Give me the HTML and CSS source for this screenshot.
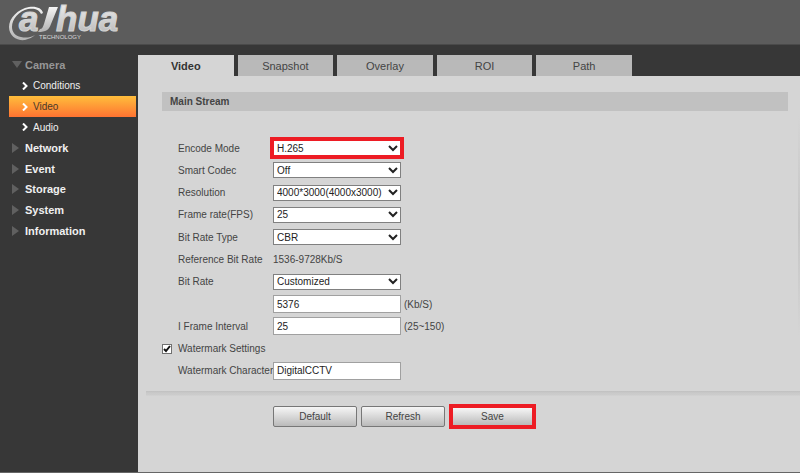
FILE: index.html
```html
<!DOCTYPE html>
<html lang="en">
<head>
  <meta charset="UTF-8">
  <meta name="viewport" content="width=device-width, initial-scale=1.0">
  <title>Camera - Video</title>
  <link rel="stylesheet" href="styles.css">
</head>
<body>
  <header class="header">
    <svg class="logo" width="124" height="44" viewBox="0 0 124 44" role="img" aria-label="alhua technology">
      <defs>
        <linearGradient id="silver" x1="0" y1="0" x2="0" y2="1">
          <stop offset="0" stop-color="#f4f4f4"/>
          <stop offset="1" stop-color="#b4b4b4"/>
        </linearGradient>
      </defs>
      <path fill="url(#silver)" d="M43 13 C42 8 36 6 29 7 C18 9 9 18 9 27 C9 36 17 41 25 40 C29 39 33 37 35 35 C30 38 25 38 21 37 C15 36 12 32 12 27 C12 19 19 11 28 9 C34 8 39 9 41 14 Z"/>
      <path fill="url(#silver)" d="M49 7 L58 7 L51 24 C49 30 46 32 38 32 L40 29 C42 29 43 27 44 24 Z"/>
      <text class="logo-name" x="19" y="31" fill="url(#silver)">a</text>
      <text class="logo-name" x="56" y="31" fill="url(#silver)">hua</text>
      <text class="logo-sub" x="39" y="39">TECHNOLOGY</text>
    </svg>
  </header>

  <div class="layout">
    <nav class="sidebar">
      <a href="#" class="group open"><svg class="arrow" width="10" height="10" viewBox="0 0 10 10"><path d="M0 1h10L5 8z"/></svg>Camera</a>
      <a href="#" class="item"><svg class="chevron" width="6" height="8" viewBox="0 0 6 8"><path d="M1 0.500l3.500 3.500L1 7.500"/></svg>Conditions</a>
      <a href="#" class="item active"><svg class="chevron" width="6" height="8" viewBox="0 0 6 8"><path d="M1 0.500l3.500 3.500L1 7.500"/></svg>Video</a>
      <a href="#" class="item"><svg class="chevron" width="6" height="8" viewBox="0 0 6 8"><path d="M1 0.500l3.500 3.500L1 7.500"/></svg>Audio</a>
      <a href="#" class="group"><svg class="arrow" width="10" height="10" viewBox="0 0 10 10"><path d="M0 0v10l7-5z"/></svg>Network</a>
      <a href="#" class="group"><svg class="arrow" width="10" height="10" viewBox="0 0 10 10"><path d="M0 0v10l7-5z"/></svg>Event</a>
      <a href="#" class="group"><svg class="arrow" width="10" height="10" viewBox="0 0 10 10"><path d="M0 0v10l7-5z"/></svg>Storage</a>
      <a href="#" class="group"><svg class="arrow" width="10" height="10" viewBox="0 0 10 10"><path d="M0 0v10l7-5z"/></svg>System</a>
      <a href="#" class="group"><svg class="arrow" width="10" height="10" viewBox="0 0 10 10"><path d="M0 0v10l7-5z"/></svg>Information</a>
    </nav>

    <main class="main">
      <div class="tabs">
        <button type="button" class="tab selected">Video</button>
        <button type="button" class="tab">Snapshot</button>
        <button type="button" class="tab">Overlay</button>
        <button type="button" class="tab">ROI</button>
        <button type="button" class="tab">Path</button>
      </div>

      <form class="panel">
        <h2 class="section-title">Main Stream</h2>

        <div class="fields">
          <div class="row">
            <label for="encode">Encode Mode</label>
            <select id="encode" class="control highlight"><option>H.265</option></select>
          </div>
          <div class="row">
            <label for="codec">Smart Codec</label>
            <select id="codec" class="control"><option>Off</option></select>
          </div>
          <div class="row">
            <label for="resolution">Resolution</label>
            <select id="resolution" class="control"><option>4000*3000(4000x3000)</option></select>
          </div>
          <div class="row">
            <label for="fps">Frame rate(FPS)</label>
            <select id="fps" class="control"><option>25</option></select>
          </div>
          <div class="row">
            <label for="rate-type">Bit Rate Type</label>
            <select id="rate-type" class="control"><option>CBR</option></select>
          </div>
          <div class="row">
            <span class="name">Reference Bit Rate</span>
            <span>1536-9728Kb/S</span>
          </div>
          <div class="row">
            <label for="rate">Bit Rate</label>
            <select id="rate" class="control"><option>Customized</option></select>
          </div>
          <div class="row">
            <input type="text" id="rate-value" class="control" value="5376" aria-label="Custom bit rate">
            <span class="unit">(Kb/S)</span>
          </div>
          <div class="row">
            <label for="interval">I Frame Interval</label>
            <input type="text" id="interval" class="control" value="25">
            <span class="unit">(25~150)</span>
          </div>
          <div class="row">
            <input type="checkbox" id="watermark" class="check" checked>
            <label for="watermark">Watermark Settings</label>
          </div>
          <div class="row">
            <label for="character">Watermark Character</label>
            <input type="text" id="character" class="control" value="DigitalCCTV">
          </div>
        </div>

        <div class="actions">
          <button type="button" class="btn">Default</button>
          <button type="button" class="btn">Refresh</button>
          <button type="submit" class="btn btn-save">Save</button>
        </div>
      </form>
    </main>
  </div>
</body>
</html>
```
FILE: styles.css
```css
:root {
  --header: #5c5c5c;
  --dark: #373737;
  --panel: #d5d5d5;
  --tab: #b9b9b9;
  --bar: #c1c1c1;
  --text: #444444;
  --red: #ed1c24;
}

* {
  margin: 0;
  padding: 0;
  box-sizing: border-box;
}

body {
  display: flex;
  flex-direction: column;
  min-height: 100vh;
  background: var(--dark);
  border-bottom: 1px solid #666666;
  color: var(--text);
  font-family: 'Liberation Sans', Arial, sans-serif;
  font-size: 10px;
}

.header {
  height: 45px;
  background: var(--header);
  border-bottom: 1px solid #4a4a4a;
}

.logo {
  display: block;
}

.logo-name {
  font-size: 35px;
  font-weight: bold;
  font-style: italic;
  stroke: #d4d4d4;
  stroke-width: 1;
}

.logo-sub {
  font-size: 6px;
  fill: #d8d8d8;
}

.layout {
  display: flex;
  flex: 1;
  padding-top: 10px;
}

/* Sidebar */
.sidebar {
  display: grid;
  grid-template-rows: repeat(9, 1fr);
  align-self: flex-start;
  width: 138px;
  height: 186px;
  padding: 0 2px 0 9px;
}

.sidebar a {
  display: flex;
  align-items: center;
  color: #f0f0f0;
  text-decoration: none;
}

.group {
  padding-left: 3px;
  font-size: 11px;
  font-weight: bold;
}

.sidebar .open {
  color: #969696;
}

.arrow {
  margin-right: 3px;
  fill: #606060;
}

.item {
  padding-left: 13px;
}

.chevron {
  margin-right: 5px;
  fill: none;
  stroke: #ffffff;
  stroke-width: 2;
}

.sidebar .active {
  background: linear-gradient(#ffbe3c, #ff7331);
  color: #4a3a2a;
}

/* Tabs */
.main {
  display: flex;
  flex-direction: column;
  flex: 1;
}

.tabs {
  display: grid;
  grid-template-columns: repeat(5, 1fr);
  gap: 4px;
  max-width: 494px;
}

.tab {
  height: 21px;
  border: none;
  background: var(--tab);
  color: var(--text);
  font-family: inherit;
  font-size: 11px;
}

.tab.selected {
  background: var(--panel);
  color: #333333;
  font-weight: bold;
}

/* Settings panel */
.panel {
  position: relative;
  flex: 1;
  padding-top: 16px;
  background: var(--panel);
}

.panel::after {
  content: "";
  position: absolute;
  top: 40px;
  right: 0;
  width: 2px;
  height: 220px;
  background: linear-gradient(var(--panel), #c6c6c6, var(--panel));
}

.section-title {
  height: 19px;
  margin: 0 12px 0 24px;
  padding-left: 8px;
  background: var(--bar);
  font-size: 10px;
  line-height: 19px;
}

.fields {
  display: grid;
  grid-template-rows: repeat(11, 1fr);
  height: 245px;
  margin: 26px 12px 0 24px;
}

.row {
  display: grid;
  grid-template-columns: 16px 95px 128px auto;
  align-items: center;
}

.row label,
.row .name {
  grid-column: 2;
  white-space: nowrap;
}

.control {
  grid-column: 3;
  width: 100%;
  height: 18px;
  padding: 0 3px;
  border: 1px solid #a0a0a0;
  border-radius: 0;
  background: #ffffff;
  color: #222222;
  font-family: inherit;
  font-size: 10px;
}

select.control {
  height: 16px;
  border-color: #808080;
  appearance: none;
  background: #ffffff url("data:image/svg+xml,%3Csvg xmlns='http://www.w3.org/2000/svg' width='10' height='7'%3E%3Cpath d='M1 1l4 4 4-4' fill='none' stroke='%23222' stroke-width='2'/%3E%3C/svg%3E") no-repeat right 2px center;
}

.highlight {
  outline: 4px solid var(--red);
  outline-offset: -1px;
}

.unit {
  padding-left: 3px;
}

.check {
  width: 10px;
  height: 10px;
  appearance: none;
  border: 1px solid #707070;
  background: #ffffff;
}

.check:checked {
  background: #ffffff url("data:image/svg+xml,%3Csvg xmlns='http://www.w3.org/2000/svg' width='8' height='8'%3E%3Cpath d='M1 4l2 2 4-5' fill='none' stroke='%23111' stroke-width='2'/%3E%3C/svg%3E") no-repeat center;
}

.actions {
  display: flex;
  align-items: center;
  gap: 4px;
  margin: 9px 0 0 8px;
  padding: 13px 0 0 127px;
  background: linear-gradient(#c0c0c0, #cacaca 2px, #cccccc 4px, var(--panel) 5px);
}

.btn {
  width: 84px;
  height: 21px;
  border: 1px solid #777777;
  border-radius: 2px;
  background: linear-gradient(#f6f6f6, #bababa);
  color: var(--text);
  font-family: inherit;
  font-size: 10px;
}

.btn-save {
  width: 87px;
  height: 25px;
  border: 4px solid var(--red);
  border-radius: 0;
}
```
